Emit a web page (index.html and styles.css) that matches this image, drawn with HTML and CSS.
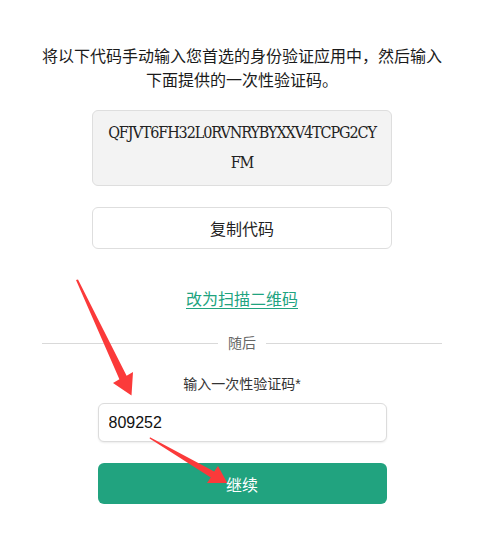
FILE: index.html
```html
<!DOCTYPE html>
<html lang="zh">
<head>
<meta charset="utf-8">
<title>验证码</title>
<link rel="stylesheet" href="styles.css">
</head>
<body>
<main class="page">
  <p class="intro">将以下代码手动输入您首选的身份验证应用中，然后输入下面提供的一次性验证码。</p>
  <div class="code-box">QFJVT6FH32L0RVNRYBYXXV4TCPG2CYFM</div>
  <button class="copy-btn" type="button">复制代码</button>
  <a class="scan-link" href="#">改为扫描二维码</a>
  <div class="divider"><span>随后</span></div>
  <label class="field-label" for="otp">输入一次性验证码*</label>
  <input class="otp-input" id="otp" type="text" value="809252">
  <button class="continue-btn" type="button">继续</button>
</main>
<svg class="arrows" width="479" height="546" viewBox="0 0 479 546" aria-hidden="true">
  <polygon points="76,280 78,279.5 126.6,375.8 133,372 131.5,395.5 113,383 119.4,379.2" fill="#fb3a3a"/>
  <polygon points="150,437.3 214.2,471.5 218,466 227.3,482.9 207,483 210.8,477.5 149.6,438.6" fill="#fb3a3a"/>
</svg>
</body>
</html>
```
FILE: styles.css
```css
html, body {
  margin: 0;
  padding: 0;
  background: #fff;
}
body {
  font-family: "Liberation Sans", "Noto Sans CJK SC", sans-serif;
  color: #222;
  width: 479px;
  height: 546px;
  overflow: hidden;
  position: relative;
}
.page {
  width: 400px;
  margin-left: 42px;
  padding-top: 45px;
  display: flex;
  flex-direction: column;
  align-items: center;
}
.intro {
  margin: 0;
  font-size: 16px;
  line-height: 24px;
  text-align: center;
  color: #1a1a1a;
}
.code-box {
  box-sizing: border-box;
  margin-top: 17px;
  width: 300px;
  padding: 7px 13px;
  background: #f3f3f3;
  border: 1px solid #dedede;
  border-radius: 6px;
  font-family: "DejaVu Serif Condensed", "DejaVu Serif", serif;
  font-size: 16px;
  letter-spacing: -1.1px;
  line-height: 30px;
  text-align: center;
  word-break: break-all;
  color: #222;
}
.copy-btn {
  box-sizing: border-box;
  margin-top: 21px;
  width: 300px;
  height: 42px;
  background: #fff;
  border: 1px solid #dedede;
  border-radius: 6px;
  font-family: inherit;
  font-size: 16px;
  color: #222;
  padding: 0;
}
.scan-link {
  margin-top: 39px;
  font-size: 16px;
  line-height: 24px;
  color: #20a37f;
  text-decoration: underline;
  text-underline-offset: 3px;
}
.divider {
  margin-top: 21px;
  width: 400px;
  display: flex;
  align-items: center;
  gap: 10px;
  font-size: 14px;
  line-height: 20px;
  color: #666;
}
.divider::before,
.divider::after {
  content: "";
  flex: 1;
  height: 1px;
  background: #d9d9d9;
}
.field-label {
  margin-top: 21px;
  font-size: 14px;
  line-height: 20px;
  color: #333;
}
.otp-input {
  box-sizing: border-box;
  margin-top: 9px;
  width: 289px;
  height: 39px;
  padding: 0 10px;
  border: 1px solid #dcdcdc;
  border-radius: 6px;
  box-shadow: 0 1px 2px rgba(0, 0, 0, 0.08);
  font-family: "Liberation Sans", sans-serif;
  font-size: 16px;
  color: #111;
  outline: none;
}
.continue-btn {
  box-sizing: border-box;
  margin-top: 21px;
  width: 289px;
  height: 41px;
  background: #21a37f;
  border: none;
  border-radius: 6px;
  font-family: inherit;
  font-size: 16px;
  color: #fff;
  padding: 0;
}
.arrows {
  position: absolute;
  left: 0;
  top: 0;
  pointer-events: none;
}
```
